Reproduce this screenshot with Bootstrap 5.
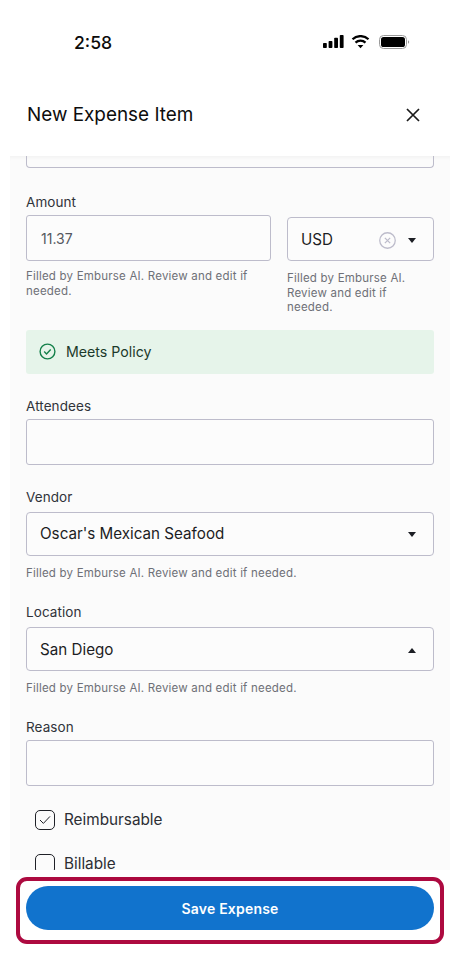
<!DOCTYPE html>
<html lang="en">
<head>
<meta charset="utf-8">
<title>New Expense Item</title>
<link rel="stylesheet" href="https://cdn.jsdelivr.net/npm/bootstrap@5.3.0/dist/css/bootstrap.min.css">
<style>
html,body{height:974px;overflow:hidden;background:#fff;}
body{font-family:Inter,"Liberation Sans",sans-serif;color:#16181d;}
.shell{width:460px;height:974px;}
.status-row{height:72px;padding:31px 50px 0 74px;}
.clock{font-size:17.6px;font-weight:500;line-height:24px;color:#0b0b0b;}
.head-row{height:84px;padding:1px 39px 0 27px;}
.head-title{font-size:18.9px;font-weight:400;line-height:28px;margin:0;color:#0d0d0d;}
.scroll-zone{height:714px;margin:0 10px;background:#fbfbfb;overflow:hidden;padding:0 16px;box-shadow:inset 0 4px 4px -3px rgba(0,0,0,.05);}
.stub{height:12px;border:1px solid #bdbccb;border-top:0;border-radius:0 0 4px 4px;margin-bottom:25px;}
.f-label{display:block;font-size:13.5px;line-height:18px;color:#30333a;margin:0 0 4px;letter-spacing:.08px;}
.f-label.tall{margin-bottom:6px;}
.f-input{height:46px;border:1px solid #bdbccb;border-radius:3px;background:#fcfcfc;padding:0 14px;font-size:14px;color:#55585f;}
.f-select{height:44px;border:1px solid #bdbccb;border-radius:4px;background:#fcfcfc;padding:2px 17px 0 13px;font-size:15.2px;color:#1c1e24;}
.f-help{font-size:11.5px;line-height:14.5px;color:#6e7077;letter-spacing:.2px;margin-top:10px;}
.f-help.near{margin-top:8px;}
.amt-col{width:245px;}
.cur-col{width:147px;padding-top:2px;}
.caret{width:0;height:0;border-left:4.5px solid transparent;border-right:4.5px solid transparent;border-top:5px solid #1c1e24;}
.caret.up{border-top:0;border-bottom:5px solid #1c1e24;}
.mark-gap{gap:12px;}
.policy-box{height:44px;background:#e6f4ea;border-radius:3px;padding:0 13px;margin-top:15px;font-size:14.2px;font-weight:400;color:#1c3a2b;}
.policy-txt{margin-left:10px;}
.chk-box{width:20px;height:20px;border:1px solid #1f2127;border-radius:5px;flex:none;}
.chk-row{padding-left:9px;font-size:15.3px;line-height:20px;color:#2c2e34;}
.chk-row .chk-txt{margin-left:1px;}
.block-gap{margin-top:23px;}
.block-gap.tight{margin-top:22px;}
.dock{height:104px;background:#fff;padding:7px 16px 0;}
.marker{border:4px solid #ad0a40;border-radius:11px;padding:5px 6px;height:67px;}
.save-btn{display:block;width:100%;height:44px;border-radius:22px;background:#1173cd;border:0;color:#fff;font-size:14px;font-weight:600;letter-spacing:.2px;}
.sp-a{margin-top:22px}
</style>
</head>
<body>
<div class="shell d-flex flex-column">
  <div class="status-row d-flex justify-content-between align-items-start">
    <span class="clock">2:58</span>
    <svg width="87" height="15" viewBox="0 0 87 15" class="mt-1">
      <rect x="0" y="8" width="3.8" height="5" rx=".8" fill="#000"/>
      <rect x="5.6" y="6" width="3.8" height="7" rx=".8" fill="#000"/>
      <rect x="11.2" y="2.8" width="3.8" height="10.2" rx=".8" fill="#000"/>
      <rect x="16.8" y="0" width="3.8" height="13" rx=".8" fill="#000"/>
      <path d="M29.5 4.3a11.5 11.5 0 0 1 16 0" fill="none" stroke="#000" stroke-width="2.2"/>
      <path d="M32.5 7.6a7.2 7.2 0 0 1 10 0" fill="none" stroke="#000" stroke-width="2.2"/>
      <path d="M34.6 10.1h5.8l-2.9 3.2z" fill="#000"/>
      <rect x="56.5" y=".5" width="27" height="13" rx="4" fill="none" stroke="#9a9a9a"/>
      <rect x="58" y="2" width="24" height="10" rx="2.6" fill="#000"/>
      <path d="M85 5.3v3.4a1.8 1.8 0 0 0 0-3.4z" fill="#9a9a9a"/>
    </svg>
  </div>
  <div class="head-row d-flex justify-content-between align-items-center">
    <h1 class="head-title">New Expense Item</h1>
    <svg width="16" height="16" viewBox="0 0 16 16"><path d="M2 2l12 12M14 2L2 14" stroke="#1a1a1a" stroke-width="1.7" fill="none"/></svg>
  </div>
  <div class="scroll-zone">
    <div class="stub"></div>
    <div class="d-flex gap-3">
      <div class="amt-col">
        <label class="f-label">Amount</label>
        <div class="f-input d-flex align-items-center">11.37</div>
        <div class="f-help near">Filled by Emburse AI. Review and edit if needed.</div>
      </div>
      <div class="cur-col">
        <div class="sp-a"></div>
        <div class="f-select d-flex align-items-center justify-content-between">
          <span>USD</span>
          <span class="d-flex align-items-center mark-gap">
            <svg width="17" height="17" viewBox="0 0 16 16"><circle cx="8" cy="8" r="7.3" fill="none" stroke="#bdbccb" stroke-width="1.2"/><path d="M5.5 5.5l5 5M10.5 5.5l-5 5" stroke="#bdbccb" stroke-width="1.2"/></svg>
            <span class="caret"></span>
          </span>
        </div>
        <div class="f-help">Filled by Emburse AI. Review and edit if needed.</div>
      </div>
    </div>
    <div class="policy-box d-flex align-items-center">
      <svg width="17" height="17" viewBox="0 0 17 17"><circle cx="8.5" cy="8.5" r="7.4" fill="none" stroke="#14804a" stroke-width="1.4"/><path d="M5.2 8.6l2.3 2.3 4.2-4.5" fill="none" stroke="#14804a" stroke-width="1.4"/></svg>
      <span class="policy-txt">Meets Policy</span>
    </div>
    <div class="block-gap">
      <label class="f-label">Attendees</label>
      <div class="f-input"></div>
    </div>
    <div class="block-gap">
      <label class="f-label tall">Vendor</label>
      <div class="f-select d-flex align-items-center justify-content-between"><span>Oscar's Mexican Seafood</span><span class="caret"></span></div>
      <div class="f-help">Filled by Emburse AI. Review and edit if needed.</div>
    </div>
    <div class="block-gap">
      <label class="f-label tall">Location</label>
      <div class="f-select d-flex align-items-center justify-content-between"><span>San Diego</span><span class="caret up"></span></div>
      <div class="f-help">Filled by Emburse AI. Review and edit if needed.</div>
    </div>
    <div class="block-gap tight">
      <label class="f-label">Reason</label>
      <div class="f-input"></div>
    </div>
    <div class="chk-row d-flex align-items-center gap-2 mt-4">
      <span class="chk-box d-flex align-items-center justify-content-center">
        <svg width="12" height="10" viewBox="0 0 12 10"><path d="M1 5l3.4 3.4L11 1.4" fill="none" stroke="#1f2127" stroke-width="1"/></svg>
      </span>
      <span class="chk-txt">Reimbursable</span>
    </div>
    <div class="chk-row d-flex align-items-center gap-2 mt-4">
      <span class="chk-box"></span>
      <span class="chk-txt">Billable</span>
    </div>
  </div>
  <div class="dock">
    <div class="marker">
      <button class="save-btn" type="button">Save Expense</button>
    </div>
  </div>
</div>
<script src="https://cdn.jsdelivr.net/npm/bootstrap@5.3.0/dist/js/bootstrap.bundle.min.js"></script>
</body>
</html>
